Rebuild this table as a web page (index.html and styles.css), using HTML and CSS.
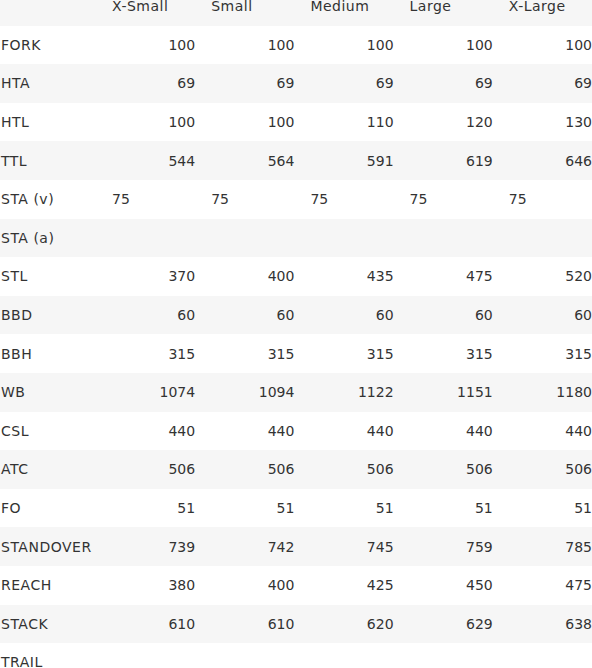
FILE: index.html
```html
<!DOCTYPE html>
<html>
<head>
<meta charset="utf-8">
<link rel="stylesheet" href="styles.css">
</head>
<body>
<div class="wrap">
<table class="geo">
<thead>
<tr><th class="lbl"></th><th>X-Small</th><th>Small</th><th>Medium</th><th>Large</th><th>X-Large</th></tr>
</thead>
<tbody>
<tr><td class="lbl">FORK</td><td>100</td><td>100</td><td>100</td><td>100</td><td>100</td></tr>
<tr><td class="lbl">HTA</td><td>69</td><td>69</td><td>69</td><td>69</td><td>69</td></tr>
<tr><td class="lbl">HTL</td><td>100</td><td>100</td><td>110</td><td>120</td><td>130</td></tr>
<tr><td class="lbl">TTL</td><td>544</td><td>564</td><td>591</td><td>619</td><td>646</td></tr>
<tr><td class="lbl">STA (v)</td><td class="left">75</td><td class="left">75</td><td class="left">75</td><td class="left">75</td><td class="left">75</td></tr>
<tr><td class="lbl">STA (a)</td><td></td><td></td><td></td><td></td><td></td></tr>
<tr><td class="lbl">STL</td><td>370</td><td>400</td><td>435</td><td>475</td><td>520</td></tr>
<tr><td class="lbl">BBD</td><td>60</td><td>60</td><td>60</td><td>60</td><td>60</td></tr>
<tr><td class="lbl">BBH</td><td>315</td><td>315</td><td>315</td><td>315</td><td>315</td></tr>
<tr><td class="lbl">WB</td><td>1074</td><td>1094</td><td>1122</td><td>1151</td><td>1180</td></tr>
<tr><td class="lbl">CSL</td><td>440</td><td>440</td><td>440</td><td>440</td><td>440</td></tr>
<tr><td class="lbl">ATC</td><td>506</td><td>506</td><td>506</td><td>506</td><td>506</td></tr>
<tr><td class="lbl">FO</td><td>51</td><td>51</td><td>51</td><td>51</td><td>51</td></tr>
<tr><td class="lbl">STANDOVER</td><td>739</td><td>742</td><td>745</td><td>759</td><td>785</td></tr>
<tr><td class="lbl">REACH</td><td>380</td><td>400</td><td>425</td><td>450</td><td>475</td></tr>
<tr><td class="lbl">STACK</td><td>610</td><td>610</td><td>620</td><td>629</td><td>638</td></tr>
<tr><td class="lbl">TRAIL</td><td></td><td></td><td></td><td></td><td></td></tr>
</tbody>
</table>
</div>
</body>
</html>
```
FILE: styles.css
```css
html, body {
  margin: 0;
  padding: 0;
  background: #fff;
  overflow: hidden;
}
.wrap {
  margin-top: -13px;
  width: 610px;
}
.geo {
  border-collapse: collapse;
  table-layout: fixed;
  width: 600px;
  font-family: "DejaVu Sans", "Open Sans", sans-serif;
  font-size: 14px;
  color: #333;
}
.geo th, .geo td {
  height: 38.6px;
  padding: 0 8px;
  box-sizing: border-box;
  width: 99.2px;
  text-align: right;
  font-weight: 400;
  line-height: 20px;
}
.geo th,
.geo .lbl {
  letter-spacing: 0.5px;
}
.geo th {
  text-align: left;
}
.geo .lbl {
  width: 104px;
  padding-left: 1px;
  text-align: left;
}
.geo td.left {
  text-align: left;
}
.geo thead tr,
.geo tbody tr:nth-child(even) {
  background: #f6f6f6;
}
```
